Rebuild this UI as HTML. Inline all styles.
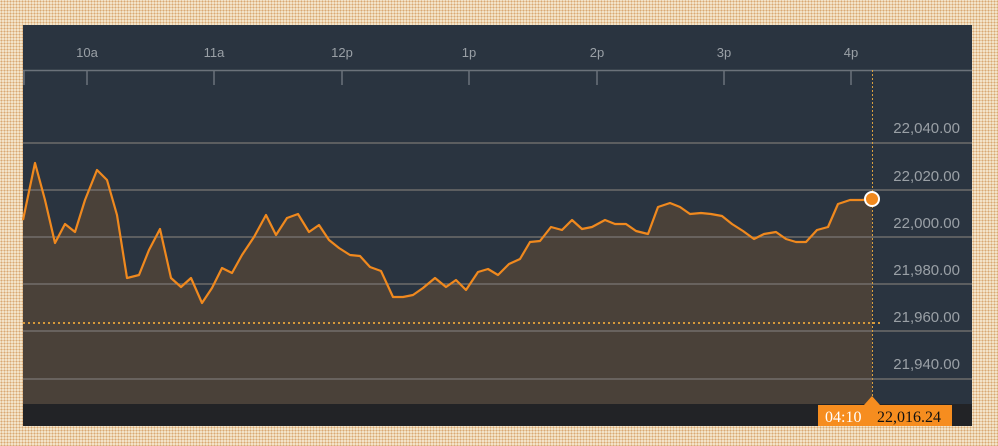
<!DOCTYPE html>
<html><head><meta charset="utf-8"><style>
html,body{margin:0;padding:0;width:998px;height:446px;overflow:hidden;
background-color:#f4e6cc;
background-image:radial-gradient(circle,#d9a872 0.9px,transparent 1.1px);
background-size:3px 3px;}
#c{position:absolute;left:23px;top:25px;width:949px;height:401px;background:#2a3440;}
</style></head><body>
<div id="c"></div>
<svg width="998" height="446" style="position:absolute;left:0;top:0" font-family="Liberation Sans, sans-serif">
<g fill="#9aa0a6" font-size="13" text-anchor="middle">
<text x="87" y="57">10a</text><text x="214" y="57">11a</text><text x="342" y="57">12p</text>
<text x="469" y="57">1p</text><text x="597" y="57">2p</text><text x="724" y="57">3p</text><text x="851" y="57">4p</text>
</g>
<g stroke="#6b727a" stroke-width="1.5">
<line x1="23" y1="70.5" x2="972" y2="70.5"/>
<line x1="24" y1="70" x2="24" y2="85"/>
<line x1="87" y1="70" x2="87" y2="85"/><line x1="214" y1="70" x2="214" y2="85"/>
<line x1="342" y1="70" x2="342" y2="85"/><line x1="469" y1="70" x2="469" y2="85"/>
<line x1="597" y1="70" x2="597" y2="85"/><line x1="724" y1="70" x2="724" y2="85"/>
<line x1="851" y1="70" x2="851" y2="85"/>
</g>
<polygon fill="#4a4139" points="23,404 23,220 35,163 45,200 55,243 65,224 75,232 85,200 97,170 107,180 117,215 127,278 139,275 149,250 160,229 171,278 181,287 191,278 202,303 212,288 222,268 232,273 242,255 254,237 266,215 276,235 287,218 298,214 309,232 319,225 329,240 339,248 350,255 360,256 370,267 381,271 393,297 403,297 413,295 423,288 435,278 446,287 456,280 466,290 478,272 488,269 498,275 509,264 520,259 530,242 540,241 551,227 562,230 572,220 582,229 592,227 605,220 615,224 626,224 636,231 648,234 658,207 670,203 680,207 690,214 701,213 711,214 722,216 732,224 743,231 754,239 764,234 776,232 786,239 796,242 806,242 817,230 828,227 838,204 850,200 862,200 872,199 872,404"/>
<g stroke="#7a7774" stroke-width="1.3">
<line x1="23" y1="143" x2="972" y2="143"/><line x1="23" y1="190" x2="972" y2="190"/>
<line x1="23" y1="237" x2="972" y2="237"/><line x1="23" y1="284" x2="972" y2="284"/>
<line x1="23" y1="331" x2="972" y2="331"/><line x1="23" y1="379" x2="972" y2="379"/>
</g>
<g fill="#9aa0a6" font-size="15" text-anchor="end">
<text x="960" y="133">22,040.00</text><text x="960" y="181">22,020.00</text>
<text x="960" y="228">22,000.00</text><text x="960" y="275">21,980.00</text>
<text x="960" y="322">21,960.00</text><text x="960" y="369">21,940.00</text>
</g>
<line x1="23" y1="323" x2="880" y2="323" stroke="#d79a3a" stroke-width="2" stroke-dasharray="2,3"/>
<line x1="872.5" y1="70" x2="872.5" y2="404" stroke="#d9a040" stroke-width="1" stroke-dasharray="2,2"/>
<polyline fill="none" stroke="#f0891e" stroke-width="2.2" stroke-linejoin="round" points="23,220 35,163 45,200 55,243 65,224 75,232 85,200 97,170 107,180 117,215 127,278 139,275 149,250 160,229 171,278 181,287 191,278 202,303 212,288 222,268 232,273 242,255 254,237 266,215 276,235 287,218 298,214 309,232 319,225 329,240 339,248 350,255 360,256 370,267 381,271 393,297 403,297 413,295 423,288 435,278 446,287 456,280 466,290 478,272 488,269 498,275 509,264 520,259 530,242 540,241 551,227 562,230 572,220 582,229 592,227 605,220 615,224 626,224 636,231 648,234 658,207 670,203 680,207 690,214 701,213 711,214 722,216 732,224 743,231 754,239 764,234 776,232 786,239 796,242 806,242 817,230 828,227 838,204 850,200 862,200 872,199"/>
<circle cx="872" cy="199" r="7" fill="#f0891e" stroke="#fff" stroke-width="2"/>
<rect x="23" y="404" width="949" height="22" fill="#222326"/>
<rect x="818" y="405" width="134" height="21" fill="#f68d1f"/>
<polygon points="864,405 872,396 880,405" fill="#f68d1f"/>
<text x="825" y="422" font-family="Liberation Serif, serif" font-size="16" fill="#fff">04:10</text>
<text x="877" y="422" font-family="Liberation Serif, serif" font-size="16" fill="#111">22,016.24</text>
</svg>
</body></html>
